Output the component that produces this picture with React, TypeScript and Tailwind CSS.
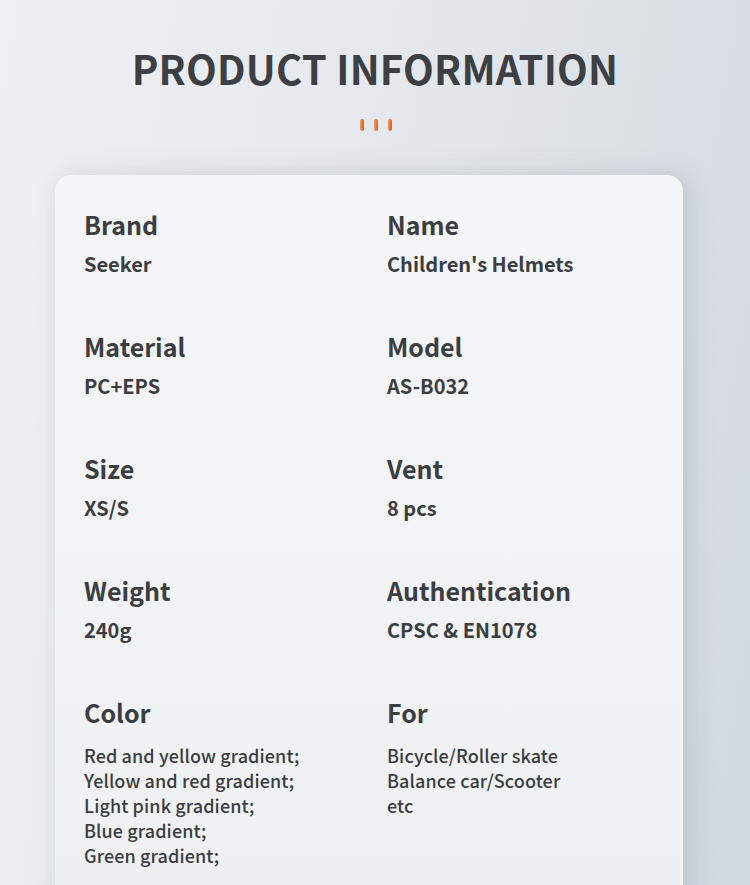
const font = { fontFamily: '"Noto Sans CJK SC", "Noto Sans", sans-serif' };

type Item = { label: string; value: string[] };

const rows: [Item, Item][] = [
  [
    { label: "Brand", value: ["Seeker"] },
    { label: "Name", value: ["Children's Helmets"] },
  ],
  [
    { label: "Material", value: ["PC+EPS"] },
    { label: "Model", value: ["AS-B032"] },
  ],
  [
    { label: "Size", value: ["XS/S"] },
    { label: "Vent", value: ["8 pcs"] },
  ],
  [
    { label: "Weight", value: ["240g"] },
    { label: "Authentication", value: ["CPSC & EN1078"] },
  ],
];

const colors = [
  "Red and yellow gradient;",
  "Yellow and red gradient;",
  "Light pink gradient;",
  "Blue gradient;",
  "Green gradient;",
];

const usage = ["Bicycle/Roller skate", "Balance car/Scooter", "etc"];

const Cell = ({ item }: { item: Item }) => (
  <div className="flex flex-col">
    <div className="text-[25px] leading-none font-bold">{item.label}</div>
    <div className="mt-[17px] text-[20px] leading-none font-bold">{item.value[0]}</div>
  </div>
);

export default function App() {
  return (
    <div
      className="h-[885px] w-[750px] overflow-hidden bg-[linear-gradient(100deg,#eff1f4_0%,#e3e7eb_50%,#d1d8df_100%)] text-[#3a3d41]"
      style={font}
    >
      <div className="flex flex-col items-center pt-[48px]">
        <h1 className="text-[40px] leading-none font-bold tracking-[0.2px] text-[#3c3f43]">
          PRODUCT INFORMATION
        </h1>
        <div className="mt-[31px] ml-[2px] flex gap-[10px]">
          <span className="h-[12px] w-[4px] rounded-full bg-[linear-gradient(90deg,#f29a55,#e8562a)]" />
          <span className="h-[12px] w-[4px] rounded-full bg-[linear-gradient(90deg,#f29a55,#e8562a)]" />
          <span className="h-[12px] w-[4px] rounded-full bg-[linear-gradient(90deg,#f29a55,#e8562a)]" />
        </div>
      </div>

      <div className="mt-[44px] ml-[55px] h-[760px] w-[628px] rounded-[16px] bg-[linear-gradient(180deg,#f4f5f7_0%,#eef0f2_100%)] pt-[37px] pl-[29px] shadow-[6px_0_24px_rgba(120,135,150,0.28)]">
        <div className="grid grid-cols-[303px_1fr] gap-y-[60px]">
          {rows.map((r, i) => (
            <div key={i} className="contents">
              <Cell item={r[0]} />
              <Cell item={r[1]} />
            </div>
          ))}
          <div className="flex flex-col">
            <div className="text-[25px] leading-none font-bold">Color</div>
            <div className="mt-[18px] text-[18px] leading-[25px] font-medium tracking-[0.1px]">
              {colors.map((c) => (
                <div key={c}>{c}</div>
              ))}
            </div>
          </div>
          <div className="flex flex-col">
            <div className="text-[25px] leading-none font-bold">For</div>
            <div className="mt-[18px] text-[18px] leading-[25px] font-medium tracking-[0.1px]">
              {usage.map((c) => (
                <div key={c}>{c}</div>
              ))}
            </div>
          </div>
        </div>
      </div>
    </div>
  );
}
